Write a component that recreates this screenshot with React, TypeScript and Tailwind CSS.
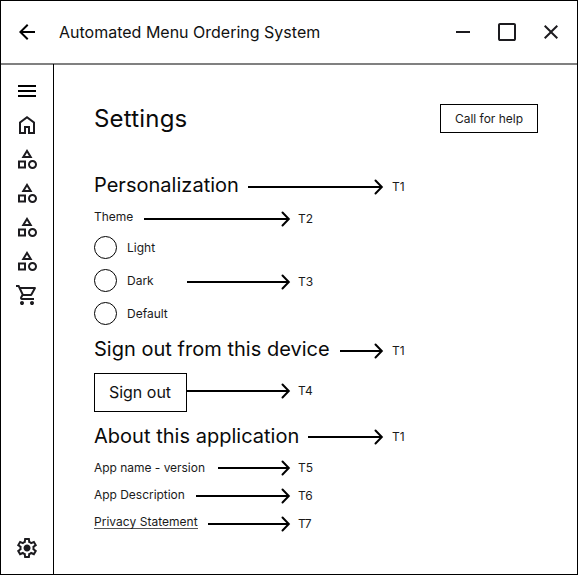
import type { ReactNode } from "react";

const ICONS = {
  back: "m313-440 224 224-57 56-320-320 320-320 57 56-224 224h487v80H313Z",
  menu: "M120-240v-80h720v80H120Zm0-200v-80h720v80H120Zm0-200v-80h720v80H120Z",
  home: "M240-200h120v-240h240v240h120v-360L480-740 240-560v360Zm-80 80v-480l320-240 320 240v480H520v-240h-80v240H160Z",
  category:
    "m260-520 220-360 220 360H260ZM700-80q-75 0-127.5-52.5T520-260q0-75 52.5-127.5T700-440q75 0 127.5 52.5T880-260q0 75-52.5 127.5T700-80Zm-580-20v-320h320v320H120Zm580-60q42 0 71-29t29-71q0-42-29-71t-71-29q-42 0-71 29t-29 71q0 42 29 71t71 29Zm-500-20h160v-160H200v160Zm202-420h156l-78-126-78 126Z",
  cart: "M280-80q-33 0-56.5-23.5T200-160q0-33 23.5-56.5T280-240q33 0 56.5 23.5T360-160q0 33-23.5 56.5T280-80Zm400 0q-33 0-56.5-23.5T600-160q0-33 23.5-56.5T680-240q33 0 56.5 23.5T760-160q0 33-23.5 56.5T680-80ZM246-720l96 200h280l110-200H246Zm-38-80h590q23 0 35 20.5t1 41.5L692-482q-11 20-29.5 31T622-440H324l-44 80h480v80H280q-45 0-68-39.5t-2-78.5l54-98-144-304H40v-80h130l38 80Z",
  settings:
    "m370-80-16-128q-13-5-24.5-12T307-235l-119 50L78-375l103-78q-1-7-1-13.5v-27q0-6.5 1-13.5L78-585l110-190 119 50q11-8 23-15t24-12l16-128h220l16 128q13 5 24.5 12t22.5 15l119-50 110 190-103 78q1 7 1 13.5v27q0 6.5-2 13.5l103 78-110 190-118-50q-11 8-23 15t-24 12L590-80H370Zm70-80h79l14-106q31-8 57.5-23.5T639-327l99 41 39-68-86-65q5-14 7-29.5t2-31.5q0-16-2-31.5t-7-29.5l86-65-39-68-99 42q-22-23-48.5-38.5T533-694l-13-106h-79l-14 106q-31 8-57.5 23.5T321-633l-99-41-39 68 86 64q-5 15-7 30t-2 32q0 16 2 31t7 30l-86 65 39 68 99-42q22 23 48.5 38.5T427-266l13 106Zm42-180q58 0 99-41t41-99q0-58-41-99t-99-41q-59 0-99.5 41T342-480q0 58 40.5 99t99.5 41Z",
  minimize: "M200-440v-80h560v80H200Z",
  maximize:
    "M200-120q-33 0-56.500-23.500T120-200v-560q0-33 23.500-56.500T200-840h560q33 0 56.500 23.500T840-760v560q0 33-23.500 56.500T760-120H200Zm0-80h560v-560H200v560Z",
  close:
    "m256-200-56-56 224-224-224-224 56-56 224 224 224-224 56 56-224 224 224 224-56 56-224-224-224 224Z",
};

function Icon({ name, className = "fill-[#1c1b1f]" }: { name: keyof typeof ICONS; className?: string }) {
  return (
    <svg viewBox="0 -960 960 960" className={`size-6 shrink-0 ${className}`}>
      <path d={ICONS[name]} />
    </svg>
  );
}

function Arrow({ length }: { length: number }) {
  return (
    <svg width={length + 1} height="16" className="shrink-0 fill-none stroke-black stroke-2">
      <path d={`M0 8H${length - 1.4}`} />
      <path d={`M${length - 7.5} 1.500L${length - 1.2} 8L${length - 7.5} 14.500`} strokeLinecap="round" />
    </svg>
  );
}

type RowProps = { children: ReactNode; className: string; noteClass: string; length: number; label: string };

function Row({ children, className, noteClass, length, label }: RowProps) {
  return (
    <div className={`flex items-start justify-between ${className}`}>
      <div className="whitespace-nowrap">{children}</div>
      <div className={`flex h-4 ${noteClass}`}>
        <Arrow length={length} />
        <span className="w-4 text-xs leading-[15px] text-[#1a1a1a]">{label}</span>
      </div>
    </div>
  );
}

function Heading({ children }: { children: ReactNode }) {
  return <h2 className="text-xl leading-6 tracking-[0.02px] text-[#0a0a0a]">{children}</h2>;
}

function Choice({ label }: { label: string }) {
  return (
    <label className="flex h-[23px] items-center gap-[10px] text-xs leading-[15px] text-[#1a1a1a]">
      <span className="size-[23px] rounded-full border border-black" />
      {label}
    </label>
  );
}

const WIDE = "w-[314px]";
const NARROW = "w-[220px]";

export default function App() {
  return (
    <div className="flex h-[575px] w-[578px] flex-col border border-black bg-white font-['Inter',sans-serif] text-black">
      <header className="flex h-16 shrink-0 items-center justify-between border-b-2 border-[#808080] px-[14px]">
        <div className="flex items-center gap-5">
          <Icon name="back" className="fill-black" />
          <span className="text-base leading-[19px] text-[#111]">Automated Menu Ordering System</span>
        </div>
        <div className="flex gap-5">
          <Icon name="minimize" />
          <Icon name="maximize" />
          <Icon name="close" />
        </div>
      </header>
      <div className="-mt-px flex min-h-0 flex-1">
        <nav className="flex w-[53px] shrink-0 flex-col items-center justify-between border-r border-black pt-[15px] pb-[14px]">
          <div className="flex flex-col gap-[10px]">
            <Icon name="menu" className="fill-black" />
            <Icon name="home" />
            <Icon name="category" />
            <Icon name="category" />
            <Icon name="category" />
            <Icon name="category" />
            <Icon name="cart" />
          </div>
          <Icon name="settings" />
        </nav>
        <main className="flex-1 pt-10 pr-[39px] pl-10">
          <div className="flex h-[29px] items-center justify-between">
            <h1 className="text-2xl leading-[29px] tracking-[0.2px] text-[#0a0a0a]">Settings</h1>
            <button className="h-[29px] w-[98px] border border-black text-xs leading-[15px] text-[#1a1a1a]">
              Call for help
            </button>
          </div>

          <Row className={`mt-10 h-9 ${WIDE}`} noteClass="mt-[6px] gap-2" length={135} label="T1">
            <Heading>Personalization</Heading>
          </Row>
          <Row className={`h-[27px] ${NARROW}`} noteClass="mt-[2px] gap-[7px]" length={146} label="T2">
            <p className="text-xs leading-[15px] text-[#1a1a1a]">Theme</p>
          </Row>
          <Choice label="Light" />
          <Row className={`my-[10px] h-[23px] ${NARROW}`} noteClass="mt-[5px] gap-[7px]" length={103} label="T3">
            <Choice label="Dark" />
          </Row>
          <Choice label="Default" />

          <Row className={`mt-3 h-9 ${WIDE}`} noteClass="mt-[6px] gap-2" length={43} label="T1">
            <Heading>Sign out from this device</Heading>
          </Row>
          <Row className={`h-[51px] ${NARROW}`} noteClass="mt-[10px] gap-[7px]" length={103} label="T4">
            <button className="h-[39px] w-[93px] border border-black pr-px text-base leading-[19px] text-[#111]">
              Sign out
            </button>
          </Row>

          <Row className={`h-9 ${WIDE}`} noteClass="mt-[5px] gap-2" length={75} label="T1">
            <Heading>About this application</Heading>
          </Row>
          <Row className={`h-[27px] ${NARROW}`} noteClass="gap-[7px]" length={72} label="T5">
            <p className="text-xs leading-[15px] tracking-[-0.03px] text-[#1a1a1a]">App name - version</p>
          </Row>
          <Row className={`h-[27px] ${NARROW}`} noteClass="mt-px gap-[7px]" length={94} label="T6">
            <p className="text-xs leading-[15px] tracking-[-0.03px] text-[#1a1a1a]">App Description</p>
          </Row>
          <Row className={NARROW} noteClass="mt-[2px] gap-[7px]" length={82} label="T7">
            <a className="block h-[15px] border-b border-[#555] text-xs leading-[15px] tracking-[0.03px] text-[#1a1a1a]">
              Privacy Statement
            </a>
          </Row>
        </main>
      </div>
    </div>
  );
}
